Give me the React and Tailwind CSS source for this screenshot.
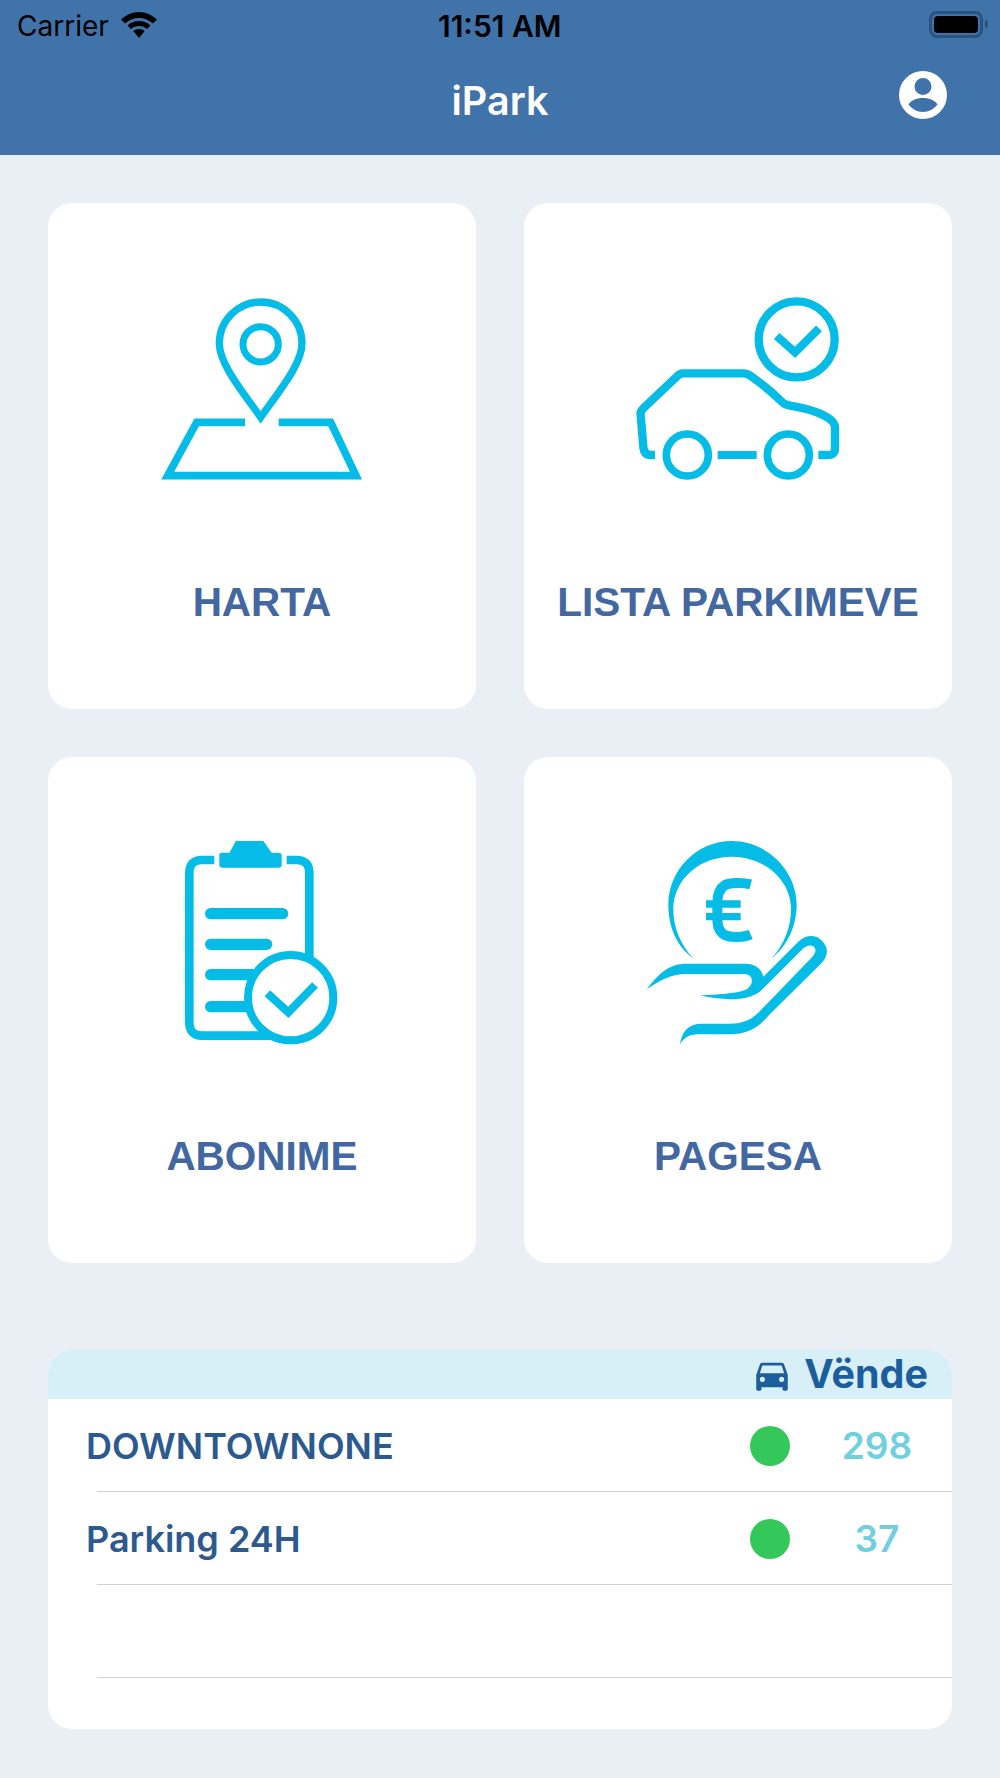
import { MdDirectionsCar } from "react-icons/md";

const blue = "#05bce6";

function MapIcon() {
  return (
    <svg width="240" height="220" viewBox="0 0 720 660" fill="none" stroke={blue}>
      <path strokeWidth="22" d="M362 412C300 325 238 250 238 190A124 124 0 0 1 486 190C486 250 424 325 362 412Z" />
      <circle cx="362" cy="193" r="53" strokeWidth="21" />
      <path strokeWidth="23" d="M315 427H170L83 587H648L572 427H416" />
    </svg>
  );
}

function CarIcon() {
  return (
    <svg width="240" height="220" viewBox="0 0 720 660" fill="none" stroke={blue}>
      <circle cx="530" cy="178" r="114" strokeWidth="25" />
      <path strokeWidth="25" d="M470 168L525 217L597 145" />
      <path
        strokeWidth="25"
        d="M105 525H92Q72 525 70 500L62 405Q60 395 70 385L170 290Q178 280 190 280H370Q382 280 395 290C430 315 460 340 485 365Q495 375 510 377C560 385 640 405 645 440V505Q645 525 625 525H595"
      />
      <circle cx="202" cy="525" r="63" strokeWidth="23" />
      <circle cx="505" cy="525" r="63" strokeWidth="23" />
      <path strokeWidth="24" d="M293 525H410" />
    </svg>
  );
}

function ClipboardIcon() {
  return (
    <svg width="200" height="230" viewBox="0 0 600 690" fill="none" stroke={blue}>
      <path strokeWidth="26" d="M163 105H125Q88 105 88 145V590Q88 632 125 632H345" />
      <path strokeWidth="26" d="M380 105H410Q448 105 448 145V400" />
      <path
        fill={blue}
        stroke="none"
        d="M178 90Q178 83 185 83H208L228 48H310L335 83H355Q365 83 365 90V120Q365 128 355 128H188Q178 128 178 120Z"
      />
      <g strokeWidth="34" strokeLinecap="round">
        <path d="M152 266H368" />
        <path d="M152 358H320" />
        <path d="M152 449H300" />
        <path d="M152 545H290" />
      </g>
      <circle cx="392" cy="518" r="128" strokeWidth="24" fill="#fff" />
      <path strokeWidth="24" d="M322 505L385 562L465 480" />
    </svg>
  );
}

function EuroHandIcon() {
  return (
    <svg width="220" height="230" viewBox="0 0 660 690" fill="none">
      <path
        fill={blue}
        d="M190 400C140 365 115 305 115 240C115 135 200 48 305 48C410 48 500 135 500 240C500 305 470 365 425 400C465 355 485 300 483 245C478 160 400 95 305 95C210 95 135 160 130 245C128 300 148 355 190 400Z"
      />
      <path
        stroke={blue}
        strokeWidth="30"
        d="M362 178C340 172 300 172 285 180Q262 195 262 235V280Q262 320 285 330C300 338 340 338 362 328"
      />
      <path stroke={blue} strokeWidth="22" d="M228 237H332M228 275H332" />
      <path
        fill={blue}
        d="M50 493C90 440 120 416 170 416H345C375 416 395 430 400 455L505 350C530 325 565 328 582 355C597 375 592 397 572 417L420 567C390 602 360 628 300 628H210C180 628 165 635 150 657C155 620 175 596 215 596H300C340 596 365 583 385 563L543 400C563 380 558 365 545 362C535 360 525 365 515 375L395 495C370 520 320 525 290 522C260 520 235 518 212 510C260 510 320 505 345 495C370 485 375 450 345 447H170C120 447 85 470 50 493Z"
      />
    </svg>
  );
}

function Card({ label, iconClass, children }) {
  return (
    <div className="h-[506px] rounded-[24px] bg-white flex flex-col items-center">
      <div className={`h-[340px] flex justify-center ${iconClass}`}>{children}</div>
      <div className="mt-[32px] font-['Liberation_Sans',sans-serif] font-bold text-[40.5px] leading-[54px] text-[#4267a1]">
        {label}
      </div>
    </div>
  );
}

function Row({ name, count }) {
  return (
    <div className="h-[93px] flex flex-col">
      <div className="h-[92px] flex items-center pl-[38px] pr-[13px] pt-[2px]">
        <div className="flex-1 text-[36px] font-semibold text-[#2c5a8f]">{name}</div>
        <div className="w-10 h-10 rounded-full bg-[#34c759]"></div>
        <div className="w-[124px] ml-[25px] text-center text-[37px] font-semibold text-[#70d0e0]">{count}</div>
      </div>
      <div className="h-px ml-[49px] bg-[#d0d0d4]"></div>
    </div>
  );
}

export default function App() {
  return (
    <div className="w-[1000px] h-[1778px] bg-[#eaeff6] font-['Inter',sans-serif] overflow-hidden">
      <div className="h-[155px] bg-[#4073a9] relative">
        <div className="h-[50px] flex items-center justify-between pl-[17px] pr-[12px] text-black">
          <div className="flex items-center gap-[12px]">
            <span className="mt-[2px] text-[28px]">Carrier</span>
            <svg width="36" height="26" viewBox="0 0 36 26" fill="black">
              <path d="M18 0C11 0 5 3 0 7.500L4 11.500C8 8 12.500 6 18 6C23.500 6 28 8 32 11.500L36 7.500C31 3 25 0 18 0Z" />
              <path d="M18 9C13.500 9 9.500 10.500 6.500 13.500L10 17C12 15.200 15 14 18 14C21 14 24 15.200 26 17L29.500 13.500C26.500 10.500 22.500 9 18 9Z" />
              <path d="M18 17C15.800 17 14 17.700 12.300 19L18 26L23.700 19C22 17.700 20.200 17 18 17Z" />
            </svg>
          </div>
          <span className="absolute left-[438px] top-[4px] text-[30px] font-semibold">11:51 AM</span>
          <div className="flex items-center gap-[2px] -mt-[2px]">
            <div className="w-[54px] h-[27px] rounded-[8px] border-[3px] border-[#2a5480] p-[2px]">
              <div className="w-full h-full rounded-[4px] bg-black"></div>
            </div>
            <div className="w-[3px] h-[8px] rounded-r bg-[#2a5480]"></div>
          </div>
        </div>
        <div className="absolute top-[76px] left-0 w-full text-center text-[39.500px] leading-[50px] font-semibold text-white">iPark</div>
        <svg className="absolute left-[899px] top-[71px]" width="48" height="48" viewBox="0 0 48 48" fill="#fff">
          <path
            fillRule="evenodd"
            d="M24 0A24 24 0 1 1 24 48A24 24 0 1 1 24 0ZM24 7A8.500 8.500 0 1 0 24 24A8.500 8.500 0 1 0 24 7ZM24 27C17 27 12 29.500 9.500 33.500C13 38 18 41 24 41C30 41 35 38 38.500 33.500C36 29.500 31 27 24 27Z"
          />
        </svg>
      </div>

      <div className="px-[48px] pt-[48px]">
        <div className="grid grid-cols-2 gap-[48px]">
          <Card label="HARTA" iconClass="pt-[77px] pr-[4px]"><MapIcon /></Card>
          <Card label="LISTA PARKIMEVE" iconClass="pt-[77px] pl-[4px]"><CarIcon /></Card>
          <Card label="ABONIME" iconClass="pt-[68px] pr-[4px]"><ClipboardIcon /></Card>
          <Card label="PAGESA" iconClass="pt-[68px] pl-[4px]"><EuroHandIcon /></Card>
        </div>

        <div className="mt-[87px] h-[379px] rounded-[24px] bg-white overflow-hidden">
          <div className="h-[49px] bg-[#d7f0f7] flex items-center justify-end pr-[24px] text-[#1b5e9b]">
            <MdDirectionsCar size={42} />
            <span className="ml-[11px] text-[39.500px] font-bold leading-[49px]">Vënde</span>
          </div>
          <Row name="DOWNTOWNONE" count="298" />
          <Row name="Parking 24H" count="37" />
          <div className="h-[93px] flex flex-col justify-end">
            <div className="h-px ml-[49px] bg-[#d0d0d4]"></div>
          </div>
        </div>
      </div>
    </div>
  );
}
